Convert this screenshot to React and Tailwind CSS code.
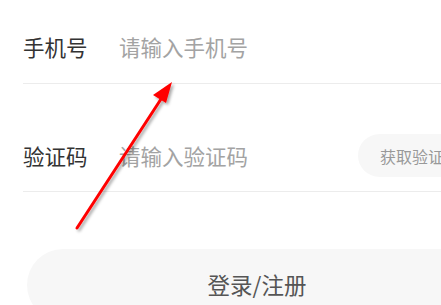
export default function App() {
  return (
    <div
      className="relative w-[441px] h-[305px] overflow-hidden bg-white"
      style={{ fontFamily: '"Noto Sans CJK SC", "Noto Sans", sans-serif' }}
    >
      <div className="w-[510px]">
        <div className="ml-[23px] flex items-center pt-[35px] pb-[24px] border-b border-[#ececec]">
          <span className="w-[96px] text-[21.5px] leading-[24px] text-[#333]">手机号</span>
          <span className="text-[21.5px] leading-[24px] text-[#a3a3a3]">请输入手机号</span>
        </div>
        <div className="ml-[23px] flex items-center pt-[50px] pb-[14px] border-b border-[#ececec]">
          <span className="w-[96px] shrink-0 text-[21.5px] leading-[24px] text-[#333]">验证码</span>
          <span className="w-[239px] shrink-0 text-[21.5px] leading-[24px] text-[#a3a3a3]">请输入验证码</span>
          <div className="shrink-0 h-[43px] w-[150px] rounded-full bg-[#f7f7f7] flex items-center pl-[22px]">
            <span className="text-[16px] text-[#999] whitespace-nowrap">获取验证码</span>
          </div>
        </div>
        <div className="ml-[27px] mt-[57px] w-[460px] h-[72px] rounded-full bg-[#f7f7f7] flex items-center justify-center">
          <span className="text-[22.5px] text-[#555]">登录/注册</span>
        </div>
      </div>
      <svg className="absolute left-0 top-0" width="441" height="305" viewBox="0 0 441 305">
        <defs>
          <filter id="sh" x="-20%" y="-20%" width="140%" height="140%">
            <feDropShadow dx="2" dy="2" stdDeviation="1.5" floodColor="#000" floodOpacity="0.35" />
          </filter>
        </defs>
        <g filter="url(#sh)">
          <line x1="77" y1="228" x2="163" y2="96" stroke="#ff0000" strokeWidth="3" strokeLinecap="round" />
          <polygon points="172,82 153,95 166,103" fill="#ff0000" />
        </g>
      </svg>
    </div>
  );
}
